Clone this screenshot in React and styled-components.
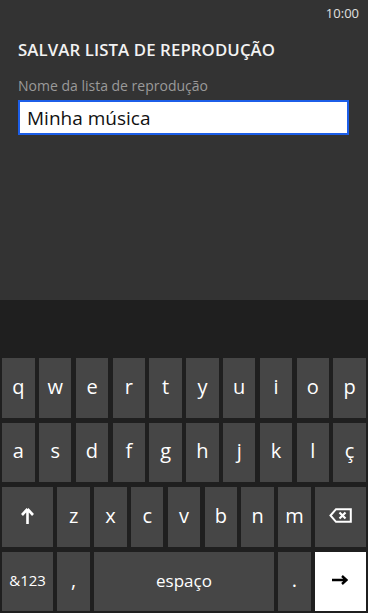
import React from 'react';
import styled, { createGlobalStyle } from 'styled-components';

const GlobalStyle = createGlobalStyle`
  html, body {
    margin: 0;
    padding: 0;
    background: #333333;
  }
  body {
    font-family: "Open Sans", "Noto Sans", "Liberation Sans", sans-serif;
  }
`;

const Screen = styled.div`
  width: 368px;
  height: 613px;
  display: flex;
  flex-direction: column;
  background: #333333;
  overflow: hidden;
`;

const Top = styled.div`
  flex: 1;
  display: flex;
  flex-direction: column;
  padding: 0 19px 0 18px;
`;

const StatusBar = styled.div`
  height: 26px;
  display: flex;
  justify-content: flex-end;
  align-items: center;
  margin-right: -10px;
  font-size: 13px;
  color: #e0e0e0;
`;

const Title = styled.h1`
  margin: 12px 0 0;
  font-size: 16.8px;
  font-weight: 600;
  color: #f2f2f2;
  letter-spacing: 0.1px;
`;

const Label = styled.div`
  margin-top: 15px;
  font-size: 14px;
  color: #9a9a9a;
`;

const Field = styled.div`
  margin-top: 5px;
  height: 35px;
  box-sizing: border-box;
  border: 2px solid #1c5ee8;
  background: #ffffff;
  display: flex;
  align-items: center;
  padding-left: 7px;
  font-size: 19px;
  color: #111111;
`;

const Keyboard = styled.div`
  height: 313px;
  box-sizing: border-box;
  background: #1f1f1f;
  padding: 58px 2.3px 2px;
  display: grid;
  grid-template-columns: repeat(20, 1fr);
  grid-auto-rows: 59.5px;
  column-gap: 4.6px;
  row-gap: 5px;
`;

const Key = styled.div`
  grid-column: span ${(p) => p.$span || 2};
  background: ${(p) => (p.$accent ? '#ffffff' : '#464646')};
  color: ${(p) => (p.$accent ? '#000000' : '#ffffff')};
  display: flex;
  align-items: center;
  justify-content: center;
  font-size: ${(p) => p.$size || 20}px;
  line-height: 1;
  padding-bottom: 2px;
  box-sizing: border-box;
`;

const ShiftIcon = () => (
  <svg width="13" height="16" viewBox="0 0 13 16">
    <path d="M6.5 1 L1 7 M6.5 1 L12 7 M6.5 1.5 V16" stroke="#fff" strokeWidth="2.6" fill="none" />
  </svg>
);

const BackspaceIcon = () => (
  <svg width="23" height="15" viewBox="0 0 23 15">
    <path d="M1.5 7.5 L7 1.2 H21.8 V13.8 H7 Z" stroke="#fff" strokeWidth="2" fill="none" strokeLinejoin="miter" />
    <path d="M10.5 4.5 L16.5 10.5 M16.5 4.5 L10.5 10.5" stroke="#fff" strokeWidth="2.2" />
  </svg>
);

const EnterIcon = () => (
  <svg width="16" height="10" viewBox="0 0 16 10">
    <path d="M0 5 H14 M10 1 L14.5 5 L10 9" stroke="#000" strokeWidth="2.4" fill="none" />
  </svg>
);

const row1 = ['q', 'w', 'e', 'r', 't', 'y', 'u', 'i', 'o', 'p'];
const row2 = ['a', 's', 'd', 'f', 'g', 'h', 'j', 'k', 'l', 'ç'];
const row3 = ['z', 'x', 'c', 'v', 'b', 'n', 'm'];

export default function App() {
  return (
    <Screen>
      <GlobalStyle />
      <Top>
        <StatusBar>10:00</StatusBar>
        <Title>SALVAR LISTA DE REPRODUÇÃO</Title>
        <Label>Nome da lista de reprodução</Label>
        <Field>Minha música</Field>
      </Top>
      <Keyboard>
        {row1.map((k) => (
          <Key key={k}>{k}</Key>
        ))}
        {row2.map((k) => (
          <Key key={k}>{k}</Key>
        ))}
        <Key $span={3}>
          <ShiftIcon />
        </Key>
        {row3.map((k) => (
          <Key key={k}>{k}</Key>
        ))}
        <Key $span={3}>
          <BackspaceIcon />
        </Key>
        <Key $span={3} $size={15}>&amp;123</Key>
        <Key $size={20}>,</Key>
        <Key $span={10} $size={17}>espaço</Key>
        <Key $size={20}>.</Key>
        <Key $span={3} $accent>
          <EnterIcon />
        </Key>
      </Keyboard>
    </Screen>
  );
}
